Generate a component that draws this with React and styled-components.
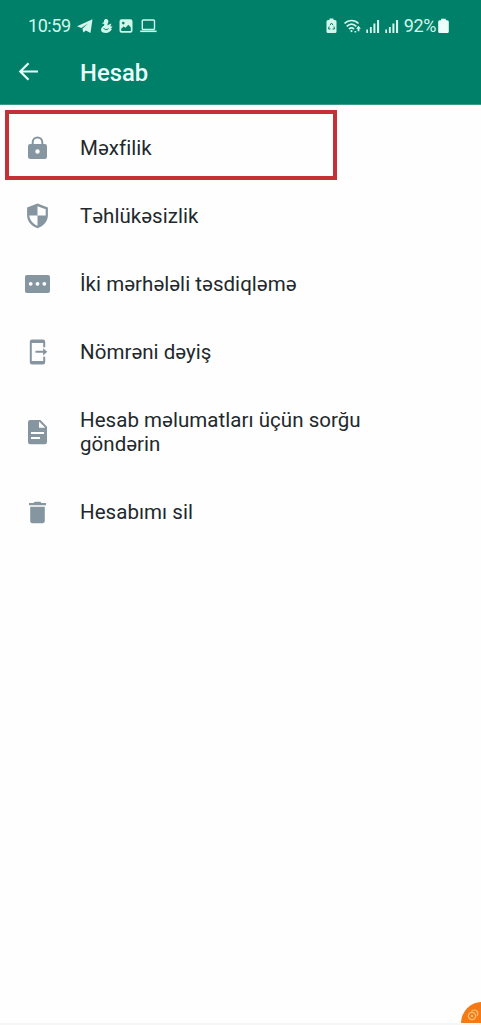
import React from "react";
import styled, { createGlobalStyle } from "styled-components";

const GlobalStyle = createGlobalStyle`
  * {
    box-sizing: border-box;
  }
  body {
    margin: 0;
    background: #fefefe;
    font-family: Roboto, "Noto Sans", sans-serif;
  }
`;

const Screen = styled.div`
  position: relative;
  width: 100%;
  height: 1025px;
  overflow: hidden;
  border-bottom: 2px solid #f6f6f6;
`;

const Header = styled.header`
  height: 105px;
  background: #018069;
  border-bottom: 1px solid #3c9a88;
  color: #e9fffa;
`;

const StatusBar = styled.div`
  display: flex;
  align-items: center;
  justify-content: space-between;
  height: 40px;
  padding: 12px 32px 0 28px;
  color: #d3f6ec;
`;

const StatusGroup = styled.div`
  display: flex;
  align-items: center;
  gap: ${({ gap }) => gap || "7px"};
`;

const StatusText = styled.span`
  font-size: 18px;
  line-height: 28px;
  letter-spacing: ${({ spacing }) => spacing || "0"};
`;

const StatusIcon = styled.svg`
  display: block;
  flex: none;
  height: 16px;
  width: ${({ w }) => w}px;
`;

const TitleBar = styled.div`
  display: flex;
  align-items: center;
  height: 64px;
  padding-left: 18px;
`;

const BackIcon = styled.svg`
  display: block;
  width: 22px;
  height: 22px;
  margin-right: 40px;
`;

const Title = styled.h1`
  margin: 2px 0 0;
  font-size: 23.8px;
  font-weight: 500;
  line-height: 30px;
`;

const List = styled.ul`
  list-style: none;
  margin: 0;
  padding: 9px 0 0;
`;

const Item = styled.li`
  display: flex;
  align-items: center;
  padding: 22px 90px 22px 24px;
  cursor: pointer;
`;

const ItemIcon = styled.svg`
  display: block;
  flex: none;
  width: 28px;
  height: 28px;
  margin: -2px 28px -2px 0;
  color: #8696a0;
`;

const Label = styled.span`
  font-size: 20.5px;
  line-height: 24px;
  letter-spacing: 0.04px;
  font-variant-ligatures: none;
  color: #22282b;
`;

// red frame drawn over the first row
const Highlight = styled.div`
  position: absolute;
  top: 110px;
  left: 5px;
  width: 332px;
  height: 70px;
  border: 4px solid #c42f38;
  pointer-events: none;
`;

const Bubble = styled.div`
  position: absolute;
  left: 461px;
  top: 1002px;
  width: 42px;
  height: 42px;
  border-radius: 50%;
  background: #f47a16;
`;

const BubbleIcon = styled.svg`
  position: absolute;
  left: 5px;
  top: 5px;
  width: 15px;
  height: 15px;
`;

const LockIcon = () => (
  <ItemIcon viewBox="0 0 28 28">
    <path d="M8.7 11V8.2a4.8 4.8 0 0 1 9.6 0V11" fill="none" stroke="currentColor" strokeWidth="2" />
    <path
      fill="currentColor"
      fillRule="evenodd"
      d="M6.2 10h14.6a2.2 2.2 0 0 1 2.2 2.2v10.6a2.2 2.2 0 0 1-2.2 2.2H6.2A2.2 2.2 0 0 1 4 22.8V12.2A2.2 2.2 0 0 1 6.2 10zm7.3 5.3a2.2 2.2 0 1 0 0 4.4 2.2 2.2 0 0 0 0-4.4z"
    />
  </ItemIcon>
);

const ShieldIcon = () => (
  <ItemIcon viewBox="0 0 28 28">
    <path
      fill="currentColor"
      fillRule="evenodd"
      d="M13.5 1.6l10.4 4v7.6c0 5.8-4.3 11-10.4 13-6.1-2-10.4-7.2-10.4-13V5.6zM13.5 4.3V13.5H21.7V7.2zM13.5 13.5H5.3c.3 4.3 3.5 8.3 8.2 10.2z"
    />
  </ItemIcon>
);

const PinIcon = () => (
  <ItemIcon viewBox="0 0 28 28">
    <rect x="1" y="5" width="25" height="18" rx="2" fill="currentColor" />
    <circle cx="6.7" cy="13.8" r="1.9" fill="#fff" />
    <circle cx="13.5" cy="13.8" r="1.9" fill="#fff" />
    <circle cx="20.3" cy="13.8" r="1.9" fill="#fff" />
  </ItemIcon>
);

const PhoneIcon = () => (
  <ItemIcon viewBox="0 0 28 28">
    <path
      fill="currentColor"
      fillRule="evenodd"
      d="M8 1.5h11a2.2 2.2 0 0 1 2.2 2.2v5.5h-2V5H7.8v18h11.4v-4.2h2v5.5a2.2 2.2 0 0 1-2.2 2.2H8a2.2 2.2 0 0 1-2.2-2.2V3.7A2.2 2.2 0 0 1 8 1.5z"
    />
    <path fill="currentColor" d="M11.5 12.8h7.6v-2.6l4.2 3.6-4.2 3.6v-2.6h-7.6z" />
  </ItemIcon>
);

const DocIcon = () => (
  <ItemIcon viewBox="0 0 28 28">
    <path
      fill="currentColor"
      fillRule="evenodd"
      d="M6.2 2h10.3L23 8.7V24a2.2 2.2 0 0 1-2.2 2.2H6.2A2.2 2.2 0 0 1 4 24V4.2A2.2 2.2 0 0 1 6.2 2zM15 3.6v6.2h6.3zM7 14v2.1h13V14zM7 18.9V21h9v-2.1z"
    />
  </ItemIcon>
);

const TrashIcon = () => (
  <ItemIcon viewBox="0 0 28 28">
    <path
      fill="currentColor"
      d="M10.7 3.7h5.6l1.2 1.3H22V7.3H5V5h4.5zM6.2 8.7h14.6V23a2.2 2.2 0 0 1-2.2 2.2H8.4A2.2 2.2 0 0 1 6.2 23z"
    />
  </ItemIcon>
);

const Signal = () => (
  <StatusIcon w={14} viewBox="0 0 14 16">
    <path fill="currentColor" d="M0.3 11.5H2V15H0.3zM3.9 9h1.9v6H3.9zM7.4 5.5h2V15h-2zM11 2h2.1v13H11z" />
  </StatusIcon>
);

const items = [
  { label: "Məxfilik", Icon: LockIcon },
  { label: "Təhlükəsizlik", Icon: ShieldIcon },
  { label: "İki mərhələli təsdiqləmə", Icon: PinIcon },
  { label: "Nömrəni dəyiş", Icon: PhoneIcon },
  { label: "Hesab məlumatları üçün sorğu göndərin", Icon: DocIcon },
  { label: "Hesabımı sil", Icon: TrashIcon },
];

const App = () => {
  return (
    <Screen>
      <GlobalStyle />
      <Header>
        <StatusBar>
          <StatusGroup gap="6.5px">
            <StatusText spacing="-0.45px">10:59</StatusText>
            {/* telegram */}
            <StatusIcon w={16} viewBox="0 0 16 16">
              <path fill="currentColor" d="M0 8.3L15.5 1.2 13.5 15 8.8 12.4 6.4 14.6 5.4 10.7 11 5.5 4.3 10z" />
            </StatusIcon>
            {/* duck */}
            <StatusIcon w={13} viewBox="0 0 13 16">
              <path
                fill="currentColor"
                d="M5.8 1C7.6.8 8.7 2.300 8.300 4 8 5.200 7.300 6 7.500 7.200l3.800-1.700c0 1.200-.5 2-1.300 2.700l2.500.2c-.5 1.100-1.300 1.600-2.200 1.900l1.700.8C10.500 13.800 8.300 15 6 15c-3 0-5-1.200-5-3.300 0-1.800 1.400-2.700 2.800-3.900C4.500 7 4.300 6.300 4 5.800L1.800 5.500 3.900 4C3.900 2.300 4.500 1.200 5.800 1z"
              />
              <path d="M3.6 10c1 2 3 2.2 5 .6" fill="none" stroke="#018069" strokeWidth="1" />
            </StatusIcon>
            {/* gallery */}
            <StatusIcon w={14} viewBox="0 0 14 16">
              <path
                fill="currentColor"
                fillRule="evenodd"
                d="M2.5 1.3h9a2 2 0 0 1 2 2v9.400a2 2 0 0 1-2 2h-9a2 2 0 0 1-2-2V3.300a2 2 0 0 1 2-2zM2.200 13h9.600V9.300L9.300 6.800 6.500 9.800 4.700 8.600 2.200 10.800zM4.300 3.800a1.300 1.300 0 1 0 0 2.600 1.300 1.300 0 0 0 0-2.600z"
              />
            </StatusIcon>
            {/* laptop */}
            <StatusIcon w={17} viewBox="0 0 17 16">
              <rect x="2.3" y="2" width="12.2" height="9.5" rx="1" fill="none" stroke="currentColor" strokeWidth="1.4" />
              <path fill="currentColor" d="M0.2 12.5h16.4v1.6H0.2z" />
            </StatusIcon>
          </StatusGroup>
          <StatusGroup gap="5px">
            {/* battery saver */}
            <StatusIcon w={14} viewBox="-1.5 0 14 16">
              <path
                fill="currentColor"
                d="M3 0.5h4V2h1.5A1.5 1.5 0 0 1 10 3.5v10A1.5 1.5 0 0 1 8.5 15h-7A1.5 1.5 0 0 1 0 13.5v-10A1.5 1.5 0 0 1 1.5 2H3z"
              />
              <path
                d="M3.5 7.2L5 5l1.5 2.2M7.5 8.5L8 11H6M4 11H2l.6-2.5"
                fill="none"
                stroke="#018069"
                strokeWidth="1"
              />
            </StatusIcon>
            {/* wifi */}
            <StatusIcon w={17} viewBox="0 0 17 16">
              <g fill="none" stroke="currentColor" strokeWidth="1.7">
                <path d="M0.5 5.5c4-4 10-4 14 0" />
                <path d="M2.7 8.4c3-2.9 6.7-2.9 9.6 0" />
                <path d="M5 11c1.7-1.5 3.3-1.5 5 0" />
              </g>
              <circle cx="7.5" cy="13.1" r="1.1" fill="currentColor" />
              <path fill="currentColor" d="M14.5 7.8l2.4 2.9h-1.500v2.500h-1.800v-2.500h-1.500zM10.500 13h1.700v1.500h-1.700z" />
            </StatusIcon>
            <Signal />
            <Signal />
            <StatusGroup gap="2px">
              <StatusText spacing="-0.4px">92%</StatusText>
              <StatusIcon w={11} viewBox="0 0 11 16">
                <path
                  fill="#ecfffb"
                  d="M3.2 0.8h4.6v1.5h1.500a1.500 1.500 0 0 1 1.500 1.500v9.700A1.500 1.500 0 0 1 9.300 15H1.700A1.500 1.500 0 0 1 .2 13.500V3.800A1.500 1.500 0 0 1 1.700 2.300h1.500z"
                />
              </StatusIcon>
            </StatusGroup>
          </StatusGroup>
        </StatusBar>
        <TitleBar>
          <BackIcon viewBox="0 0 22 22">
            <path d="M20 10.5H2.5M10.5 2.3L2.3 10.5l8.2 8.2" fill="none" stroke="currentColor" strokeWidth="2.2" />
          </BackIcon>
          <Title>Hesab</Title>
        </TitleBar>
      </Header>
      <List>
        {items.map(({ label, Icon }) => (
          <Item key={label}>
            <Icon />
            <Label>{label}</Label>
          </Item>
        ))}
      </List>
      <Highlight />
      <Bubble>
        <BubbleIcon viewBox="0 0 15 15">
          <circle cx="6" cy="9" r="3.6" fill="none" stroke="#ffc07a" strokeWidth="1.3" />
          <path d="M5.5 4.3a3.5 3.5 0 1 1 5.5 4.5" fill="none" stroke="#ffc07a" strokeWidth="1.2" />
          <circle cx="6" cy="9" r="1.2" fill="#ffc07a" />
        </BubbleIcon>
      </Bubble>
    </Screen>
  );
};

export default App;
